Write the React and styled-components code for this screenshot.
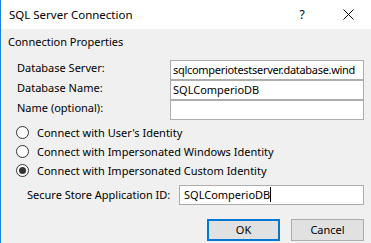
import React from "react";
import styled, { createGlobalStyle } from "styled-components";

const Global = createGlobalStyle`
  html, body { margin: 0; padding: 0; background: #f0f0f0; }
  body { font-family: "Noto Sans", "Open Sans", sans-serif; font-size: 11px; color: #000; }
  * { box-sizing: border-box; }
`;

const Window = styled.div`
  width: 371px;
  height: 243px;
  overflow: hidden;
  background: #f0f0f0;
  border-left: 1px solid #1883d7;
  display: flex;
  flex-direction: column;
`;

const TitleBar = styled.div`
  height: 29px;
  background: #fff;
  display: flex;
  align-items: center;
  padding-left: 8px;
  flex-shrink: 0;
`;

const Title = styled.div`
  flex: 1;
  font-size: 11.5px;
  line-height: 16px;
`;

const Caption = styled.div`
  width: 46px;
  height: 29px;
  display: flex;
  align-items: center;
  justify-content: center;
  font-size: 12px;
  color: #000;
`;

const Body = styled.div`
  flex: 1;
  display: flex;
  flex-direction: column;
  padding: 5px 7px 0 7px;
`;

const GroupLabel = styled.div`
  line-height: 16px;
  margin-bottom: 10px;
`;

const FieldGrid = styled.div`
  display: grid;
  grid-template-columns: 153px 194px;
  grid-auto-rows: 20px;
  padding-left: 9px;
`;

const FieldLabel = styled.div`
  line-height: 16px;
`;

const TextBox = styled.div`
  height: 20px;
  background: #fff;
  border: 1px solid #adadad;
  padding: 0 1px 0 2px;
  line-height: 17px;
  white-space: nowrap;
  overflow: hidden;
  letter-spacing: ${(p) => (p.$tight ? "-0.3px" : "0")};
`;

const RadioList = styled.div`
  display: flex;
  flex-direction: column;
  gap: 6px;
  margin-top: 6px;
  padding-left: 8px;
`;

const RadioRow = styled.label`
  display: flex;
  align-items: center;
  height: 13px;
  gap: 8px;
`;

const RadioCircle = styled.span`
  width: 13px;
  height: 13px;
  border-radius: 50%;
  border: 1px solid #333;
  background: #fff;
  display: flex;
  align-items: center;
  justify-content: center;
  flex-shrink: 0;
  &::after {
    content: "";
    width: 7px;
    height: 7px;
    border-radius: 50%;
    background: ${(p) => (p.$checked ? "#333" : "transparent")};
  }
`;

const SecureRow = styled.div`
  display: flex;
  align-items: center;
  margin-top: 8px;
  padding-left: 19px;
`;

const SecureLabel = styled.div`
  width: 152px;
  line-height: 16px;
  white-space: nowrap;
`;

const SecureBox = styled(TextBox)`
  width: 185px;
  padding-left: 4px;
`;

const Cursor = styled.span`
  display: inline-block;
  width: 1px;
  height: 15px;
  background: #000;
  vertical-align: -3px;
`;

const ButtonRow = styled.div`
  display: flex;
  justify-content: flex-end;
  gap: 11px;
  margin-top: 14px;
`;

const Button = styled.button`
  width: 73px;
  height: 22px;
  background: #e1e1e1;
  border: ${(p) => (p.$primary ? "2px solid #0078d7" : "1px solid #adadad")};
  font-family: inherit;
  font-size: 11px;
  color: #000;
  padding: 0;
  line-height: 16px;
`;

export default function App() {
  return (
    <>
      <Global />
      <Window>
        <TitleBar>
          <Title>SQL Server Connection</Title>
          <Caption>?</Caption>
          <Caption>
            <svg width="11" height="11" viewBox="0 0 11 11">
              <path d="M0.5 0.5 L10.5 10.5 M10.5 0.5 L0.5 10.5" stroke="#000" strokeWidth="1" fill="none" />
            </svg>
          </Caption>
        </TitleBar>
        <Body>
          <GroupLabel>Connection Properties</GroupLabel>
          <FieldGrid>
            <FieldLabel>Database Server:</FieldLabel>
            <TextBox $tight>sqlcomperiotestserver.database.wind</TextBox>
            <FieldLabel>Database Name:</FieldLabel>
            <TextBox>SQLComperioDB</TextBox>
            <FieldLabel>Name (optional):</FieldLabel>
            <TextBox />
          </FieldGrid>
          <RadioList>
            <RadioRow>
              <RadioCircle />
              Connect with User's Identity
            </RadioRow>
            <RadioRow>
              <RadioCircle />
              Connect with Impersonated Windows Identity
            </RadioRow>
            <RadioRow>
              <RadioCircle $checked />
              Connect with Impersonated Custom Identity
            </RadioRow>
          </RadioList>
          <SecureRow>
            <SecureLabel>Secure Store Application ID:</SecureLabel>
            <SecureBox>
              SQLComperioDB<Cursor />
            </SecureBox>
          </SecureRow>
          <ButtonRow>
            <Button $primary>OK</Button>
            <Button>Cancel</Button>
          </ButtonRow>
        </Body>
      </Window>
    </>
  );
}
